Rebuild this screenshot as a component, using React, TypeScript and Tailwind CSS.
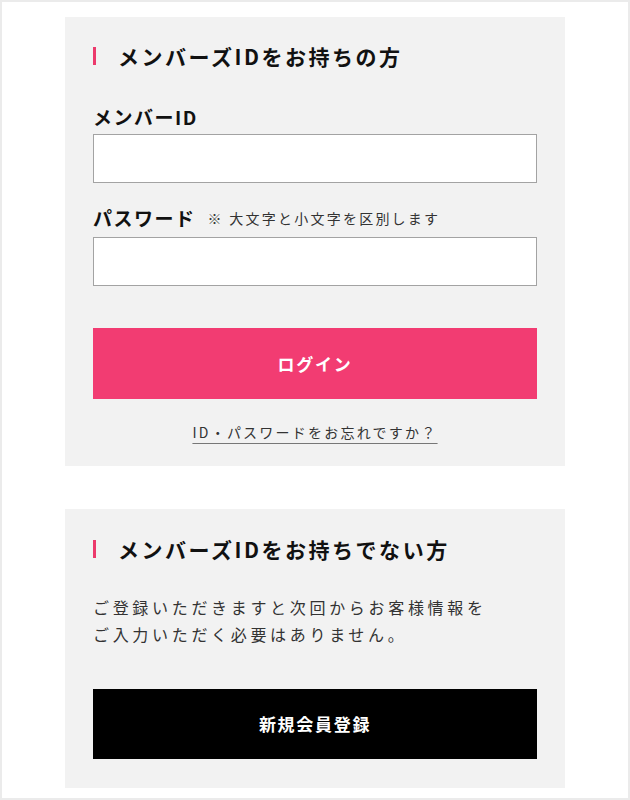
import React from 'react';

const font = { fontFamily: '"Noto Sans CJK JP", "Noto Sans", sans-serif' };

function Heading({ children }: { children: React.ReactNode }) {
  return (
    <div className="flex items-center h-[22px]">
      <span className="block w-[3px] h-[18px] bg-[#ec3a6c]" />
      <h2 className="ml-[22px] text-[21px] leading-[22px] font-bold tracking-[0.12em] text-[#111]">{children}</h2>
    </div>
  );
}

export default function App() {
  return (
    <div className="w-[630px] h-[800px] bg-white border-2 border-[#ebebeb] pt-[15px] pl-[63px]" style={font}>
      {/* メンバーズIDをお持ちの方 */}
      <div className="w-[500px] h-[449px] bg-[#f2f2f2] pt-[28px] px-[28px]">
        <Heading>メンバーズIDをお持ちの方</Heading>

        <label className="block mt-[38px] text-[19px] leading-[24px] font-bold tracking-[0.08em] text-[#111]">
          メンバーID
        </label>
        <input type="text" className="block mt-[5px] w-[444px] h-[49px] bg-white border border-[#a3a3a3] outline-none px-3" />

        <div className="flex items-center mt-[23px] h-[24px]">
          <span className="text-[19px] leading-[24px] font-bold tracking-[0.08em] text-[#111]">パスワード</span>
          <span className="ml-[12px] text-[14px] tracking-[0.16em] text-[#333]">※ 大文字と小文字を区別します</span>
        </div>
        <input type="password" className="block mt-[7px] w-[444px] h-[49px] bg-white border border-[#a3a3a3] outline-none px-3" />

        <button className="mt-[42px] w-[444px] h-[71px] bg-[#f23c72] text-white text-[17px] font-bold tracking-[0.1em]">
          ログイン
        </button>

        <div className="mt-[20px] text-center">
          <a href="#" className="text-[14px] leading-[20px] tracking-[0.16em] text-[#333] underline decoration-[#777] underline-offset-[5px]">
            ID・パスワードをお忘れですか？
          </a>
        </div>
      </div>

      {/* メンバーズIDをお持ちでない方 */}
      <div className="mt-[43px] w-[500px] h-[279px] bg-[#f2f2f2] pt-[29px] px-[28px]">
        <Heading>メンバーズIDをお持ちでない方</Heading>

        <p className="mt-[34px] text-[16px] leading-[27px] tracking-[0.23em] text-[#333]">
          ご登録いただきますと次回からお客様情報を
          <br />
          ご入力いただく必要はありません。
        </p>

        <button className="mt-[41px] w-[444px] h-[70px] bg-black text-white text-[17px] font-bold tracking-[0.1em]">
          新規会員登録
        </button>
      </div>
    </div>
  );
}
